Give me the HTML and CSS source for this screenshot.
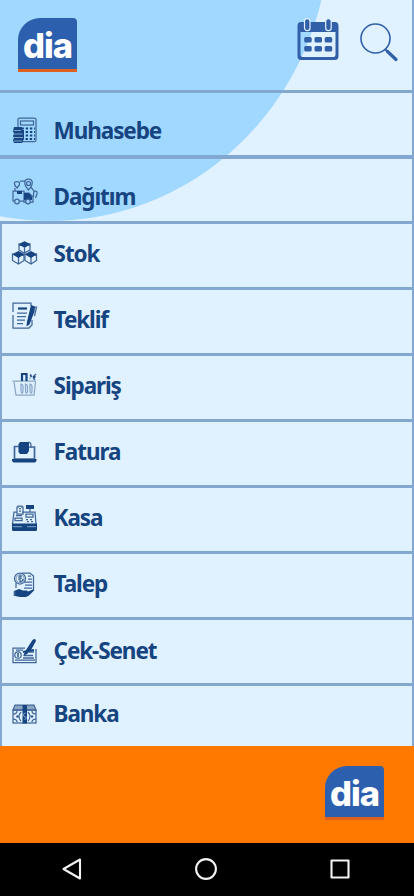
FILE: index.html
```html
<!DOCTYPE html>
<html lang="tr">
<head>
<meta charset="utf-8">
<meta name="viewport" content="width=device-width">
<title>dia</title>
<link rel="stylesheet" href="styles.css">
</head>
<body>
<div class="screen">
  <header class="header">
    <div class="logo"><span>dia</span></div>
    <div class="actions">
      <svg class="calendar" width="42" height="43" viewBox="0 0 42 43" fill="#315fa8">
        <path fill-rule="evenodd" d="M4 4H38Q41.500 4 41.500 8V38Q41.500 42 38 42H4Q.5 42 .5 38V8Q.5 4 4 4ZM3.500 14V37Q3.500 39 5.500 39H36.500Q38.500 39 38.500 37V14Z"/>
        <g stroke="#e0f1ff" stroke-width="1.200"><rect x="7.500" y=".6" width="5.500" height="12" rx="2.700"/><rect x="28.700" y=".6" width="5.500" height="12" rx="2.700"/></g>
        <g><rect x="7.200" y="19" width="7.500" height="5.500" rx="1.500"/><rect x="17.500" y="19" width="7.500" height="5.500" rx="1.500"/><rect x="27.700" y="19" width="7.500" height="5.500" rx="1.500"/><rect x="7.200" y="28" width="7.500" height="5.500" rx="1.500"/><rect x="17.500" y="28" width="7.500" height="5.500" rx="1.500"/><rect x="27.700" y="28" width="7.500" height="5.500" rx="1.500"/></g>
      </svg>
      <svg class="search" width="40" height="40" viewBox="0 0 40 40" fill="none" stroke="#315fa8" stroke-linecap="round">
        <circle cx="15.500" cy="15.500" r="14.500" stroke-width="1.600"/><path d="M25.500 26.500L28 29" stroke-width="2"/><path d="M27.500 28.500L36 36.500" stroke-width="3.200"/>
      </svg>
    </div>
  </header>
  <ul class="menu">
    <li class="row accounting">
      <svg class="icon" viewBox="0 0 28 30">
        <rect x="7" y="2" width="18" height="23.500" rx="1.500"/><rect x="9.500" y="5" width="13" height="4"/>
        <path class="heavy" stroke-dasharray="2.400 1.800" d="M10.500 12.500H24M10.500 16H24M10.500 19.500H24M14.500 23H24"/>
        <path class="solid" d="M3 11h8v3h2v9l-2 4H3l-1-3 1-2-1-2 1-2-1-3z"/><path class="light" d="M3 14.500h7M2.500 18h9M3 21.500h9M3 25h8"/>
      </svg><span class="label">Muhasebe</span></li>
    <li class="row delivery">
      <svg class="icon" viewBox="0 0 28 30">
        <path d="M17.500 13C12 7 13 2 17.500 2S23 7 17.500 13Z"/><circle cx="17.500" cy="6.500" r="2"/>
        <path d="M6 11C2 7 3 4.500 6 4.500S10 7 6 11ZM9 4h5M20 10l3 4M22.500 20v-3q0-3 2-3t1.500 3l-1.500 4"/>
        <path d="M2 14H13V24H2ZM13 16h5l4 4v5h-9zM4 11v3"/><path class="solid" d="M6 14h5v3H6zM13 16h5l3 4v3h-8z"/>
        <circle class="wheel" cx="6" cy="24.500" r="2.300"/><circle class="wheel" cx="17" cy="24.500" r="2.300"/>
      </svg><span class="label">Dağıtım</span></li>
    <li class="row stock">
      <svg class="icon" viewBox="0 0 28 30">
        <g><path d="M8 4V10L13 13 19 10V4L13.500 7Z"/><path class="solid" d="M7.700 4L13.500 1.200 19.300 4 13.500 7.500Z"/><path d="M13.500 7v6"/></g>
        <g><path d="M1.500 14V20.500L7.500 24 13 20.500V14L7.500 17ZM7.500 17v7"/><path class="solid" d="M1.500 14L7.500 11 13 14 7.500 18Z"/></g>
        <g><path d="M14 14V20.500L20 24 25.500 20.500V14L20 17ZM20 17v7"/><path class="solid" d="M14 14L20 11 25.500 14 20 18Z"/></g>
      </svg><span class="label">Stok</span></li>
    <li class="row offer">
      <svg class="icon" viewBox="0 0 28 30">
        <path d="M20 5V2H2V11M2 14V27H18L21 24V19"/><path class="heavy" d="M7 7.500H16"/><path d="M6 12H16M6 15.500H15M6 19H14M6 22.500H12"/>
        <path class="solid" d="M20 4l4 1.500-.5 5-5 13-3 2 .5-5z"/><path d="M24 6l1.500 0-2 9"/>
      </svg><span class="label">Teklif</span></li>
    <li class="row order">
      <svg class="icon" viewBox="0 0 28 30">
        <g class="faint"><path d="M1.500 9H25M3 10L5 23H23L24.500 10M10 12q2 0 2 3v3q0 3-1 3t-1-3zM14.500 12q2 0 2 3v3q0 3-1 3t-1-3zM19 12q2 0 2 3v3q0 3-1 3t-1-3z"/></g>
        <path class="heavy" d="M11 9V2H15.500V9"/><path d="M19 3l2 2M25 2l-3 3M22 6l2 2M18.500 6h1"/><path class="heavy" d="M19 3.500h1.500M22.500 6l1.500-2"/>
      </svg><span class="label">Sipariş</span></li>
    <li class="row invoice">
      <svg class="icon" viewBox="0 0 28 30">
        <path class="mid" d="M8 6.500H3.500V19H23.500V7H19"/><path class="solid" d="M9 2H18V11L16 14H9L7.500 12V4Z"/><path d="M17 2q3 0 3 3v2h-2"/><path class="solid" d="M1 19H25.500V21L24 22.500H2.500L1 21Z"/>
      </svg><span class="label">Fatura</span></li>
    <li class="row cash">
      <svg class="icon" viewBox="0 0 28 30">
        <path d="M6 9H3L1.500 21M11 9H24L25 21M6 11V4h1V3h4v1h1V11ZM8 5.500h2M8 8h2"/><path class="solid" d="M15 2h8v4h-8zM1 20.500H26V27Q26 28 24.500 28H2.500Q1 28 1 27Z"/>
        <path d="M19 6v3M15 11h7v3h-7zM4 15h7v2.500H4zM5 12.500h6M15 16.500h2M19 16.500h2M16 18.500h2M20 18.500h2"/><path class="light" d="M2 23.700H11M16 23.700H25"/>
      </svg><span class="label">Kasa</span></li>
    <li class="row demand">
      <svg class="icon" viewBox="0 0 28 30">
        <path d="M11 2H19L22.500 5V20M13 11h8M14 14h7M13 17h8M17 5h3M17 8h4"/><circle cx="9" cy="7.500" r="5.500"/><circle cx="9" cy="7.500" r="4" class="faint"/><path d="M9 4v7M7 6l4-1M7 8l4-1M9 11q3-1 3-3M5 12v5"/>
        <path class="solid" d="M3 20l5-2 4 1.500h4l1 1 5-2 1 1-5 5-3 1.500H9l-5-1z"/><path class="mid" d="M3.500 20.500v4.500"/>
      </svg><span class="label">Talep</span></li>
    <li class="row cheque">
      <svg class="icon" viewBox="0 0 28 30">
        <path d="M14 11H2V25.500H25V12M5 13h7M4 23h20"/><circle cx="7" cy="18" r="3.200"/><path class="mid" d="M7 16v4M12 21H23M13 18.500h9M18 15h5"/>
        <path class="solid" d="M12 19l3-6 6.500-10q3-2.500 3.500 1l-5 9-4 4z"/><path class="heavy" d="M12 15l11-2"/>
      </svg><span class="label">Çek-Senet</span></li>
    <li class="row bank">
      <svg class="icon" viewBox="0 0 28 30">
        <path class="shade" d="M4 2H23L25 7H2Z"/><rect x="2" y="7" width="23" height="13"/><path d="M2 11q4 0 4-3M2 16q4 0 4 3M25 11q-4 0-4-3M25 16q-4 0-4 3M10 9q-4 4.500 0 9M17 9q4 4.500 0 9"/>
        <circle class="dot" cx="6.500" cy="13.500" r="1.300"/><circle class="dot" cx="21" cy="13.500" r="1.300"/><path class="solid" d="M11.500 2h4.500v18.500h-4.500z"/><path class="light" d="M14.500 10q-2 0-2 2t2 2-1 3"/>
      </svg><span class="label">Banka</span></li>
  </ul>
  <footer class="footer"><div class="logo"><span>dia</span></div></footer>
  <nav class="navbar">
    <svg width="20" height="24" viewBox="0 0 20 24"><path d="M18 2.500V21.500L1.500 12Z"/></svg>
    <svg width="24" height="24" viewBox="0 0 24 24"><circle cx="12" cy="12" r="9.900"/></svg>
    <svg width="20" height="20" viewBox="0 0 20 20"><rect x="1.500" y="1.500" width="17" height="17"/></svg>
  </nav>
</div>
</body>
</html>
```
FILE: styles.css
```css
* { box-sizing: border-box; }
body { margin: 0; font-family: "Noto Sans", sans-serif; }
.screen {
  width: 414px;
  height: 896px;
  display: flex;
  flex-direction: column;
  overflow: hidden;
  background: radial-gradient(ellipse 279.5px 290px at 50px -69px, #a0d8ff 99.8%, #e0f1ff 100.1%);
}
.header {
  height: 90px;
  display: flex;
  justify-content: space-between;
  align-items: flex-start;
  padding: 18px 14px 0 18px;
  border-right: 2px solid #83a9d6;
}
.logo {
  width: 59px;
  height: 54px;
  border-radius: 22px 4px 0 0;
  background: #2c5fae;
  border-bottom: 3px solid #dc611f;
  color: #fff;
  font: 800 34.5px/55px Inter, sans-serif;
  letter-spacing: -1px;
  text-align: center;
}
.actions { display: flex; gap: 20px; }
.calendar { margin-right: 0.5px; }
.search { margin-top: 5px; margin-right: -1.5px; }
.menu { height: 656px; margin: 0; padding: 0; list-style: none; }
.row {
  display: flex;
  align-items: flex-start;
  height: 66px;
  padding-left: 9px;
  border: solid #82a7d0;
  border-width: 3px 2px 0;
}
.accounting,
.delivery {
  border-left: 0;
  padding-left: 11px;
}
.accounting { height: 65px; }
.delivery { border-top-width: 4px; }
.bank { height: 63px; }
.icon {
  width: 28px;
  height: 30px;
  flex: none;
  margin-top: 17px;
  fill: none;
  stroke: #416799;
  stroke-width: 1.25;
}
.label {
  margin: 15px 0 0 14.6px;
  color: #164480;
  font-size: 22.5px;
  font-weight: 700;
  line-height: 30px;
  letter-spacing: -1.1px;
}
.accounting .icon { margin-top: 23px; }
.accounting .label { margin-top: 23px; }
.delivery .icon { margin-top: 18px; }
.delivery .label { margin-top: 23px; }
.stock .icon { margin-top: 16px; }
.offer .icon { margin-top: 11px; }
.order .icon { margin-top: 16px; }
.invoice .icon { margin-top: 18px; }
.cash .icon { margin-top: 15px; }
.cheque .label { margin-top: 16px; }
.bank .label { margin-top: 13px; }
.solid { fill: #164480; stroke: none; }
.dot { fill: #315b91; stroke: none; }
.heavy { stroke: #164480; stroke-width: 2.2; }
.mid { stroke-width: 1.7; }
.light { stroke: #9dbfe0; stroke-width: 0.8; }
.faint { stroke: #8ba7c7; }
.shade { fill: #8ba7c2; }
.wheel { fill: #a0d8ff; }
.footer {
  height: 97px;
  display: flex;
  justify-content: flex-end;
  padding: 20px 30px 0 0;
  background: #ff7900;
}
.navbar {
  height: 53px;
  display: flex;
  justify-content: space-between;
  align-items: center;
  padding: 0 64px 2px 62px;
  background: #000;
}
.navbar svg { fill: none; stroke: #f2f2f2; stroke-width: 2.1; stroke-linejoin: round; }
```
